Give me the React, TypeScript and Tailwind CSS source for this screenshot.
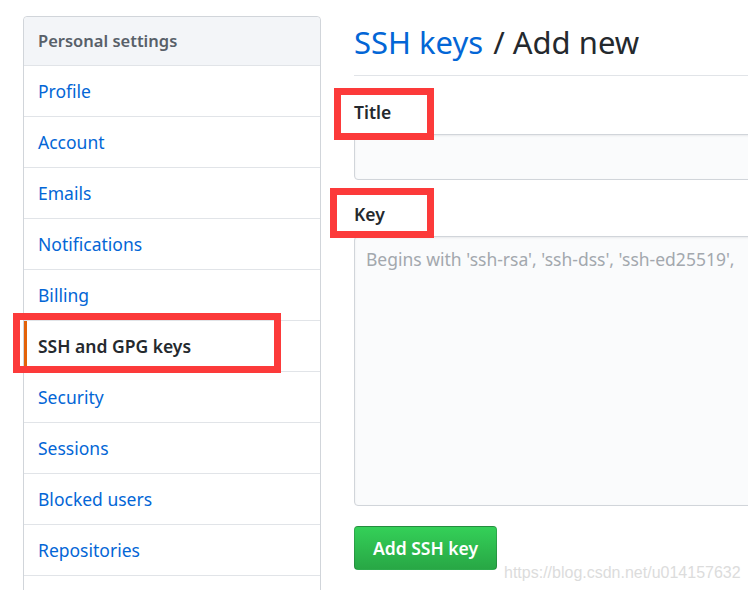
const items = [
  "Profile",
  "Account",
  "Emails",
  "Notifications",
  "Billing",
  "SSH and GPG keys",
  "Security",
  "Sessions",
  "Blocked users",
  "Repositories",
  "",
];

function Sidebar() {
  return (
    <nav className="w-[298px] shrink-0 rounded-t-[4px] border border-[#d1d5da] bg-white">
      <div className="flex h-[49px] items-center rounded-t-[4px] border-b border-[#e1e4e8] bg-[#f3f5f8] px-[14px] text-[16.5px] font-semibold text-[#586069]">
        Personal settings
      </div>
      {items.map((name, i) => {
        const active = name === "SSH and GPG keys";
        return (
          <div
            key={i}
            className={
              "relative flex h-[51px] items-center border-b border-[#e1e4e8] px-[14px] text-[17.5px] " +
              (active ? "font-semibold text-[#24292e]" : "text-[#0366d6]")
            }
          >
            {active && <span className="absolute left-0 top-0 h-full w-[3px] bg-[#e36209]" />}
            {name}
          </div>
        );
      })}
    </nav>
  );
}

function Main() {
  return (
    <div className="ml-[33px] w-[440px] shrink-0">
      <h1 className="flex h-[60px] items-center border-b border-[#e1e4e8] pb-[6px] text-[31px] font-normal leading-none text-[#24292e]">
        <span className="text-[#0366d6]">SSH keys</span>
        <span className="ml-[10px]">/ Add new</span>
      </h1>
      <div className="mt-[23px] text-[17.5px] font-semibold leading-[26px] text-[#24292e]">Title</div>
      <div className="mt-[9px] h-[46px] rounded-[4px] border border-[#d1d5da] bg-[#fafbfc] shadow-[inset_0_1px_2px_rgba(27,31,35,0.075)]" />
      <div className="mt-[21px] text-[17.5px] font-semibold leading-[26px] text-[#24292e]">Key</div>
      <div className="mt-[9px] h-[270px] rounded-[4px] border border-[#d1d5da] bg-[#fafbfc] px-[11px] pt-[9px] text-[17.5px] whitespace-nowrap text-[#a3a8ae] shadow-[inset_0_1px_2px_rgba(27,31,35,0.075)]">
        Begins with 'ssh-rsa', 'ssh-dss', 'ssh-ed25519',
      </div>
      <div className="mt-[20px] flex items-center">
        <button className="h-[44px] w-[143px] rounded-[4px] border border-[rgba(27,31,35,0.2)] bg-gradient-to-b from-[#34d058] to-[#28a745] text-[17.5px] font-semibold text-white">
          Add SSH key
        </button>
      </div>
    </div>
  );
}

export default function App() {
  return (
    <div
      className="relative h-[590px] w-[748px] overflow-hidden bg-white"
      style={{ fontFamily: '"Noto Sans", "Open Sans", sans-serif' }}
    >
      <div className="flex pl-[23px] pt-[16px]">
        <Sidebar />
        <Main />
      </div>

      {/* red annotation boxes */}
      <div className="absolute left-[13px] top-[313px] h-[60px] w-[268px] border-[7px] border-[#fc3a3a]" />
      <div className="absolute left-[334px] top-[88px] h-[52px] w-[100px] border-[7px] border-[#fc3a3a]" />
      <div className="absolute left-[330px] top-[188px] h-[50px] w-[104px] border-[7px] border-[#fc3a3a]" />

      <div
        className="absolute left-[504px] top-[561px] text-[16px] text-[#dcdcdc]"
        style={{ fontFamily: '"Liberation Sans", Arial, sans-serif' }}
      >
        https://blog.csdn.net/u014157632
      </div>
    </div>
  );
}
